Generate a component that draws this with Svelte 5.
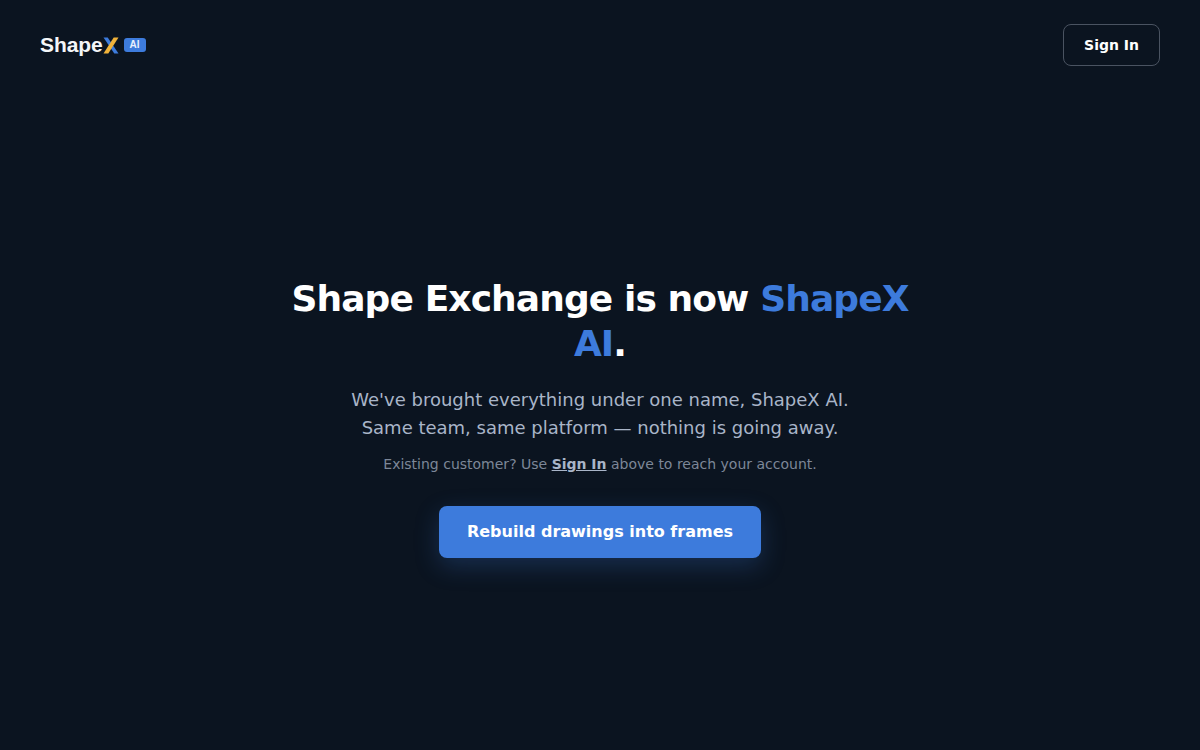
<script>
  let heading = "Shape Exchange is now";
</script>

<div class="page">
  <header class="topbar">
    <a class="logo" href="#top">
      <span class="wordmark">Shape<svg class="x-mark" viewBox="0 0 16 16" width="16" height="17" aria-label="X">
          <path d="M0.5 0h4.2l10.8 16h-4.2z" fill="#3d7bdc" />
          <path d="M15.5 0h-4.8L0.5 16h4.8z" fill="#f0b23a" />
        </svg></span>
      <span class="badge">AI</span>
    </a>
    <button class="signin">Sign In</button>
  </header>

  <main class="hero">
    <h1>{heading} <span class="accent">ShapeX AI</span>.</h1>
    <p class="lead">We've brought everything under one name, ShapeX AI.<br />Same team, same platform — nothing is going away.</p>
    <p class="note">Existing customer? Use <a href="#top">Sign In</a> above to reach your account.</p>
    <button class="cta">Rebuild drawings into frames</button>
  </main>
</div>

<style>
  :global(body) {
    background: #0b1420;
    font-family: "DejaVu Sans", sans-serif;
  }

  .page {
    height: 750px;
    display: flex;
    flex-direction: column;
    overflow: hidden;
  }

  .topbar {
    display: flex;
    align-items: center;
    justify-content: space-between;
    padding: 24px 40px;
  }

  .logo {
    display: flex;
    align-items: center;
    gap: 5px;
    text-decoration: none;
  }

  .wordmark {
    display: flex;
    align-items: center;
    font-family: "Liberation Sans", sans-serif;
    font-size: 21px;
    font-weight: 700;
    letter-spacing: -0.1px;
    color: #f4f6f8;
  }

  .badge {
    background: #3d7bdc;
    color: #e8f0fc;
    font-family: "Liberation Sans", sans-serif;
    font-size: 10px;
    font-weight: 700;
    line-height: 14px;
    padding: 0 6px;
    border-radius: 3px;
  }

  .signin {
    height: 42px;
    padding: 0 20px;
    background: transparent;
    border: 1px solid #4a5361;
    border-radius: 8px;
    color: #fff;
    font-family: inherit;
    font-size: 14px;
    font-weight: 700;
  }

  .hero {
    flex: 1;
    display: flex;
    flex-direction: column;
    align-items: center;
    justify-content: center;
    text-align: center;
    padding-bottom: 6px;
  }

  h1 {
    width: 640px;
    margin: 0 0 20px;
    color: #fff;
    font-size: 36px;
    line-height: 45px;
    font-weight: 700;
    letter-spacing: -0.9px;
  }

  .accent {
    color: #3d7bdc;
  }

  .lead {
    margin: 0 0 12px;
    color: #a9b5c8;
    font-size: 18px;
    line-height: 28px;
  }

  .note {
    margin: 0 0 32px;
    color: #7d8798;
    font-size: 14px;
    line-height: 20px;
  }

  .note a {
    color: #a9b5c8;
    font-weight: 700;
  }

  .cta {
    height: 52px;
    padding: 0 28px 2px;
    background: #3d7bdc;
    border: none;
    border-radius: 8px;
    color: #fff;
    font-family: inherit;
    font-size: 16px;
    font-weight: 700;
    box-shadow: 0 8px 24px rgba(61, 123, 220, 0.25);
  }
</style>
